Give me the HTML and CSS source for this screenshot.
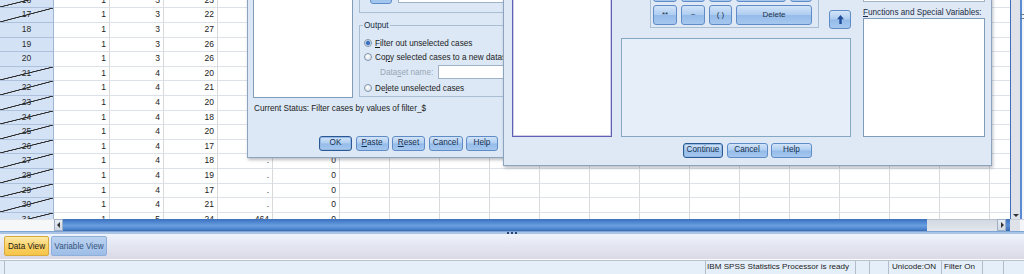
FILE: index.html
```html
<!DOCTYPE html>
<html>
<head>
<meta charset="utf-8">
<link rel="stylesheet" href="styles.css">
</head>
<body>
<div class="app">
  <div class="top">
    <div class="sheet">
      <div class="h x">16</div><div class="c">1</div><div class="c">3</div><div class="c">23</div><div class="c">.</div><div class="c">0</div><div class="rest"></div>
      <div class="h x">17</div><div class="c">1</div><div class="c">3</div><div class="c">22</div><div class="c">.</div><div class="c">0</div><div class="rest"></div>
      <div class="h">18</div><div class="c">1</div><div class="c">3</div><div class="c">27</div><div class="c">.</div><div class="c">0</div><div class="rest"></div>
      <div class="h">19</div><div class="c">1</div><div class="c">3</div><div class="c">26</div><div class="c">.</div><div class="c">0</div><div class="rest"></div>
      <div class="h">20</div><div class="c">1</div><div class="c">3</div><div class="c">26</div><div class="c">.</div><div class="c">0</div><div class="rest"></div>
      <div class="h x">21</div><div class="c">1</div><div class="c">4</div><div class="c">20</div><div class="c">.</div><div class="c">0</div><div class="rest"></div>
      <div class="h x">22</div><div class="c">1</div><div class="c">4</div><div class="c">21</div><div class="c">.</div><div class="c">0</div><div class="rest"></div>
      <div class="h x">23</div><div class="c">1</div><div class="c">4</div><div class="c">20</div><div class="c">.</div><div class="c">0</div><div class="rest"></div>
      <div class="h x">24</div><div class="c">1</div><div class="c">4</div><div class="c">18</div><div class="c">.</div><div class="c">0</div><div class="rest"></div>
      <div class="h x">25</div><div class="c">1</div><div class="c">4</div><div class="c">20</div><div class="c">.</div><div class="c">0</div><div class="rest"></div>
      <div class="h x">26</div><div class="c">1</div><div class="c">4</div><div class="c">17</div><div class="c">.</div><div class="c">0</div><div class="rest"></div>
      <div class="h x">27</div><div class="c">1</div><div class="c">4</div><div class="c">18</div><div class="c">.</div><div class="c">0</div><div class="rest"></div>
      <div class="h x">28</div><div class="c">1</div><div class="c">4</div><div class="c">19</div><div class="c">.</div><div class="c">0</div><div class="rest"></div>
      <div class="h x">29</div><div class="c">1</div><div class="c">4</div><div class="c">17</div><div class="c">.</div><div class="c">0</div><div class="rest"></div>
      <div class="h x">30</div><div class="c">1</div><div class="c">4</div><div class="c">21</div><div class="c">.</div><div class="c">0</div><div class="rest"></div>
      <div class="h x">31</div><div class="c">1</div><div class="c">5</div><div class="c">24</div><div class="c">464</div><div class="c">0</div><div class="rest"></div>
    </div>
    <div class="vscroll"><span class="vgrip"></span><span class="varrow"></span></div>

    <div class="dlg dlg-select">
      <div class="sel-body">
        <div class="listbox lb-sel"></div>
        <div class="sel-right">
          <div class="grp grp-top">
            <span class="btn sq"></span>
            <span class="field field-top"></span>
          </div>
          <div class="grp grp-out">
            <span class="grp-label">Output</span>
            <div class="rrow"><span class="radio on"></span><span><u>F</u>ilter out unselected cases</span></div>
            <div class="rrow"><span class="radio"></span><span>Co<u>p</u>y selected cases to a new dataset</span></div>
            <div class="dsrow"><span class="dslabel">Data<u>s</u>et name:</span><span class="field dsfield"></span></div>
            <div class="rrow r4"><span class="radio"></span><span>De<u>l</u>ete unselected cases</span></div>
          </div>
        </div>
      </div>
      <div class="sel-status">Current Status: Filter cases by values of filter_$</div>
      <div class="btn-row sel-btns">
        <span class="btn def w33">OK</span>
        <span class="btn w33"><u>P</u>aste</span>
        <span class="btn w33"><u>R</u>eset</span>
        <span class="btn w34">Cancel</span>
        <span class="btn w32">Help</span>
      </div>
    </div>

    <div class="dlg dlg-if">
      <div class="if-body">
        <div class="listbox lb-vars"></div>
        <div class="if-mid">
          <div class="calc-row">
            <div class="grp keypad">
              <span class="btn key">/</span><span class="btn key">&amp;</span><span class="btn key">|</span><span class="btn key">0</span><span class="btn key">.</span>
              <span class="btn key">**</span><span class="btn key">~</span><span class="btn key">( )</span><span class="btn key wide">Delete</span>
            </div>
            <span class="btn upbtn"><svg width="7" height="9" viewBox="0 0 7 9"><path d="M3.5 0 L7 4.2 H4.7 V9 H2.3 V4.2 H0 Z" fill="#1f4c9a"/></svg></span>
          </div>
          <div class="expr"></div>
        </div>
        <div class="if-right">
          <div class="field fnfield"></div>
          <div class="fnlabel"><u>F</u>unctions and Special Variables:</div>
          <div class="listbox lb-fn"></div>
        </div>
      </div>
      <div class="btn-row if-btns">
        <span class="btn def w40">Continue</span>
        <span class="btn w41">Cancel</span>
        <span class="btn w41">Help</span>
      </div>
    </div>
  </div>

  <div class="hbar">
    <span class="hgap"></span>
    <span class="harrow left"></span>
    <span class="thumb"></span>
    <span class="track"></span>
    <span class="harrow right"></span>
    <span class="hblue"></span>
    <span class="corner"></span>
  </div>
  <div class="split"><span class="dots"></span></div>
  <div class="tabs">
    <span class="tab tab-data">Data View</span>
    <span class="tab tab-var">Variable View</span>
  </div>
  <div class="sep"></div>
  <div class="status">
    <span class="st s0"></span>
    <span class="st s1"></span>
    <span class="st s2">IBM SPSS Statistics Processor is ready</span>
    <span class="st s3"></span>
    <span class="st s4"></span>
    <span class="st s5">Unicode:ON</span>
    <span class="st s6">Filter On</span>
    <span class="st s7"></span>
    <span class="st s8"></span>
  </div>
</div>
</body>
</html>
```

FILE: styles.css
```css
* { box-sizing: border-box; margin: 0; padding: 0; }
html, body { width: 1024px; height: 274px; overflow: hidden; background: #fff; }
body { font-family: "Liberation Sans", Arial, sans-serif; font-size: 8.2px; color: #1b1b1b; }
u { text-decoration: underline; text-underline-offset: 1px; }

.app { display: flex; flex-direction: column; width: 1024px; height: 274px; }

/* ---------- data grid ---------- */
.top { position: relative; height: 219px; flex: none; display: flex; overflow: hidden; }
.sheet {
  width: 1010px; flex: none;
  display: grid;
  grid-template-columns: 54px 56px 54px 54px 55px 67px 670px;
  grid-auto-rows: 14.62px;
  align-content: start;
  margin-top: -6.32px;
  font-size: 8.5px; line-height: 13.6px;
}
.h {
  background: #d4e2f5;
  border-right: 1px solid #9fb5d4;
  border-bottom: 1px solid #adc1dc;
  text-align: center; color: #2b2b2b;
}
.h.x {
  background-image: linear-gradient(to bottom right,
    transparent calc(50% - .8px), #2e2e2e calc(50% - .3px),
    #2e2e2e calc(50% + .3px), transparent calc(50% + .8px));
}
.c {
  border-right: 1px solid #d9d9d9;
  border-bottom: 1px solid #dde2e8;
  text-align: right; padding-right: 3px; color: #222;
}
.rest {
  border-bottom: 1px solid #dde2e8;
  background: repeating-linear-gradient(90deg, transparent 0 49px, #d9d9d9 49px 50px);
}
.vscroll {
  width: 14px; flex: none;
  display: flex; flex-direction: column; justify-content: space-between; align-items: center;
  background: linear-gradient(90deg, #3d6fb6 0 1px, #dfe3e9 1px 10px, #5a8ad0 10px 12px, #f3f5f8 12px);
  padding: 14px 4px 2px 0;
}
.vgrip { width: 5px; height: 5px; margin-left: 14px; border-top: 1px solid #6a7d96; border-bottom: 1px solid #6a7d96; }
.varrow { width: 0; height: 0; border-left: 3px solid transparent; border-right: 3px solid transparent; border-top: 3px solid #333; margin-left: 2px; }

/* ---------- dialogs ---------- */
.dlg {
  position: absolute;
  background: #dce8f5;
  border: 1px solid #8ea3bd;
  box-shadow: 1px 2px 3px rgba(60, 70, 90, .35);
  display: flex; flex-direction: column;
}
.dlg-select { left: 247px; top: -40px; width: 323px; height: 198px; z-index: 1; }
.dlg-if { left: 503px; top: -40px; width: 489px; height: 206px; z-index: 2; background: #dfe9f6; }

.listbox { background: #fff; border: 1px solid #7f9db9; }
.field { background: #fff; border: 1px solid #9fb2c8; display: block; }
.grp { border: 1px solid #a9bdd3; }

.btn {
  display: flex; align-items: center; justify-content: center;
  height: 15px; flex: none;
  border: 1px solid #5f8cc6; border-radius: 3px;
  background: linear-gradient(#d2e4f8, #aecdf1 48%, #94bbe9 52%, #a6c8ef);
  color: #15304f; font-size: 8.2px; line-height: 1;
}
.btn.def { border-color: #2a5995; box-shadow: inset 0 0 0 1px #95b8e2; }
.w32 { width: 32px; } .w33 { width: 33px; } .w34 { width: 34px; }
.w40 { width: 40px; } .w41 { width: 41px; }
.btn-row { display: flex; justify-content: center; gap: 3.5px; flex: none; }

/* select cases */
.sel-body { display: flex; height: 137px; flex: none; padding-left: 5px; }
.lb-sel { width: 100px; height: 137px; }
.sel-right { margin-left: 6px; flex: 1; display: flex; flex-direction: column; justify-content: flex-end; padding-bottom: 1px; }
.grp-top { height: 52px; display: flex; align-items: flex-end; border-top: 0; }
.sq { width: 22px; height: 20px; margin: 0 0 8px 10px; }
.field-top { width: 140px; height: 18px; margin: 0 0 9px 6px; }
.grp-out { position: relative; margin-top: 12px; height: 72px; padding: 10px 0 1px 0; }
.grp-label { position: absolute; top: -6px; left: 3px; padding: 0 1px; background: #dce8f5; line-height: 11px; color: #1b2b44; }
.rrow { display: flex; align-items: center; height: 14px; padding-left: 4px; gap: 3px; white-space: nowrap; }
.r4 { margin-top: 1px; }
.radio { width: 8px; height: 8px; border-radius: 50%; border: 1px solid #8194ab; background: radial-gradient(circle at 40% 35%, #fff, #d2d9e3); flex: none; }
.radio.on { background: radial-gradient(circle, #3b6fc1 0 1.6px, #9fbde6 2.3px, #f2f6fb 3px); }
.dsrow { display: flex; align-items: center; height: 16px; padding-left: 20px; white-space: nowrap; }
.dslabel { color: #9aa6b5; width: 58px; flex: none; }
.dsfield { width: 120px; height: 14px; }
.sel-status { padding-left: 6px; margin-top: 4px; line-height: 14px; height: 14px; flex: none; }
.sel-btns { margin-top: 20px; }

/* if dialog */
.if-body { display: flex; height: 176px; flex: none; padding-left: 8px; }
.lb-vars { width: 100px; height: 176px; border-color: #5f5fb3; box-shadow: inset 0 0 0 1px rgba(95, 95, 179, .3); }
.if-mid { width: 230px; margin-left: 9px; display: flex; flex-direction: column; justify-content: flex-end; }
.calc-row { display: flex; align-items: flex-end; }
.keypad {
  width: 169px; margin: 0 0 1px 29px;
  display: grid;
  grid-template-columns: 24px 24px 23px 50px 22px;
  grid-auto-rows: 20px;
  column-gap: 4px; row-gap: 3px;
  padding: 3px 6px 2px 2px;
}
.key { height: 20px; color: #22324a; font-size: 8px; }
.key.wide { grid-column: 4 / span 2; }
.upbtn { width: 22px; height: 19px; margin-left: 10px; }
.expr { height: 99px; margin-top: 9px; background: #e5eef9; border: 1px solid #84a7c2; }
.if-right { width: 122px; margin-left: 12px; display: flex; flex-direction: column; justify-content: flex-end; }
.fnfield { height: 16px; }
.fnlabel { margin-top: 5px; line-height: 11px; height: 11px; white-space: nowrap; color: #1b2b44; }
.lb-fn { height: 119px; }
.if-btns { margin-top: 6px; }

/* ---------- scrollbar / tabs / status ---------- */
.hbar { height: 12px; display: flex; flex: none; }
.hgap { width: 54px; background: #f6f7f9; border-top: 1px solid #dfe3e8; }
.harrow { width: 9px; position: relative; background: linear-gradient(#e9eef5, #cfd8e3); border: 1px solid #9fb0c6; }
.harrow::after { content: ""; position: absolute; top: 2px; border-top: 3px solid transparent; border-bottom: 3px solid transparent; }
.harrow.left::after { left: 2px; border-right: 3px solid #333; }
.harrow.right::after { left: 3px; border-left: 3px solid #333; }
.thumb { width: 864px; background: linear-gradient(#3a6fbc, #5a92d9 40%, #6aa0e0 55%, #4b83cc 85%, #3a6bb2); }
.track { width: 70px; background: linear-gradient(#d3d9e1, #e2e6ec); border-top: 1px solid #b8c2cf; }
.hblue { width: 4px; background: linear-gradient(#3a6fbc, #5a92d9 50%, #3a6bb2); }
.corner { width: 14px; background: linear-gradient(90deg, #dfe3e9 0 10px, #f3f5f8 10px); border-top: 1px solid #c8d0da; }

.split { height: 3px; flex: none; background: #a9c4e5; border-top: 1px solid #7ea4d4; display: flex; justify-content: center; align-items: center; }
.dots { width: 12px; height: 2px; background: radial-gradient(circle, #27477d 0 .9px, transparent 1.2px) 0 0 / 4px 2px repeat-x; }

.tabs { height: 25px; flex: none; display: flex; gap: 2px; padding: 2px 0 0 4px; background: linear-gradient(#eff3fb, #e3e6f1 50%, #dbd9e6); }
.tab { height: 20px; display: flex; align-items: center; justify-content: center; border-radius: 2px; font-size: 8.2px; }
.tab-data { width: 45px; background: linear-gradient(#fde9a8, #f9cf5e 60%, #f6c448); border: 1px solid #d8a93c; color: #1a1a1a; }
.tab-var { width: 56px; background: linear-gradient(#bcd3f0, #9dbde7); border: 1px solid #8eafd9; color: #34527a; }
.sep { height: 2px; flex: none; border-top: 1px solid #fdfdfe; border-bottom: 1px solid #b9c3cf; }

.status { height: 13px; flex: none; display: flex; background: #e5effa; font-size: 8.1px; line-height: 12px; color: #222; }
.st { border-left: 1px solid #b2bdca; white-space: nowrap; overflow: hidden; padding-left: 1px; }
.s0 { width: 4px; border-left: 0; }
.s1 { width: 701px; }
.s2 { width: 150px; }
.s3 { width: 14px; }
.s4 { width: 19px; }
.s5 { width: 53px; padding-left: 3px; }
.s6 { width: 41px; padding-left: 2px; }
.s7 { width: 21px; }
.s8 { width: 21px; }
```
